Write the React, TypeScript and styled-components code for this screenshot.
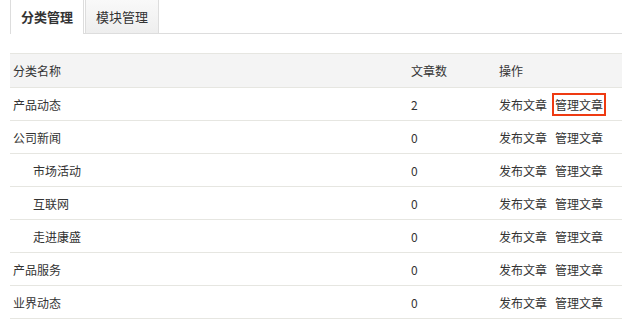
import React from "react";
import styled, { createGlobalStyle } from "styled-components";

const GlobalStyle = createGlobalStyle`
  body {
    margin: 0;
    background: #ffffff;
    font-family: "Noto Sans CJK SC", "Liberation Sans", sans-serif;
    color: #333333;
  }
`;

type Category = { name: string; count: number; level: number };

const categories: Category[] = [
  { name: "产品动态", count: 2, level: 0 },
  { name: "公司新闻", count: 0, level: 0 },
  { name: "市场活动", count: 0, level: 1 },
  { name: "互联网", count: 0, level: 1 },
  { name: "走进康盛", count: 0, level: 1 },
  { name: "产品服务", count: 0, level: 0 },
  { name: "业界动态", count: 0, level: 0 },
];

const App: React.FC = () => {
  return (
    <>
      <GlobalStyle />
      <Page>
        <TabBar>
          <Tab $active>分类管理</Tab>
          <Tab>模块管理</Tab>
        </TabBar>
        <Table>
          <colgroup>
            <col style={{ width: "398px" }} />
            <col style={{ width: "88px" }} />
            <col />
          </colgroup>
          <thead>
            <tr>
              <Th>分类名称</Th>
              <Th>文章数</Th>
              <Th>操作</Th>
            </tr>
          </thead>
          <tbody>
            {categories.map((c, i) => (
              <tr key={c.name}>
                <Td $level={c.level}>{c.name}</Td>
                <Td>{c.count}</Td>
                <Td>
                  <ActionLink href="#">发布文章</ActionLink>
                  <ActionLink href="#" $highlight={i === 0}>
                    管理文章
                  </ActionLink>
                </Td>
              </tr>
            ))}
          </tbody>
        </Table>
      </Page>
    </>
  );
};

const Page = styled.div`
  padding-left: 10px;
`;

const TabBar = styled.div`
  display: flex;
  align-items: flex-start;
  height: 33px;
  border-bottom: 1px solid #dddddd;
  margin-bottom: 19px;
`;

const Tab = styled.div<{ $active?: boolean }>`
  height: ${(p) => (p.$active ? "34px" : "33px")};
  line-height: 33px;
  padding: 0 10px;
  margin-right: 1px;
  box-sizing: border-box;
  border-left: 1px solid #dddddd;
  border-right: 1px solid #dddddd;
  background: ${(p) =>
    p.$active ? "#ffffff" : "linear-gradient(#f9f9f9, #eeeeee)"};
  font-size: 13px;
  font-weight: ${(p) => (p.$active ? "bold" : "normal")};
  color: #333333;
  cursor: pointer;
`;

const Table = styled.table`
  width: 100%;
  border-collapse: collapse;
  table-layout: fixed;
  font-size: 12px;
`;

const Th = styled.th`
  height: 33px;
  padding: 0 3px;
  text-align: left;
  font-weight: normal;
  background: #f4f4f4;
  border-top: 1px solid #e6e6e1;
  border-bottom: 1px solid #e6e6e1;
`;

const Td = styled.td<{ $level?: number }>`
  height: 32px;
  padding: 0 3px 0 ${(p) => 3 + (p.$level ?? 0) * 20}px;
  border-bottom: 1px solid #e6e6e1;
  white-space: nowrap;
`;

const ActionLink = styled.a<{ $highlight?: boolean }>`
  display: inline-block;
  line-height: 17px;
  margin-right: 8px;
  color: #333333;
  text-decoration: none;
  outline: ${(p) => (p.$highlight ? "2px solid #ee3a12" : "none")};
  outline-offset: 1px;
`;

export default App;
